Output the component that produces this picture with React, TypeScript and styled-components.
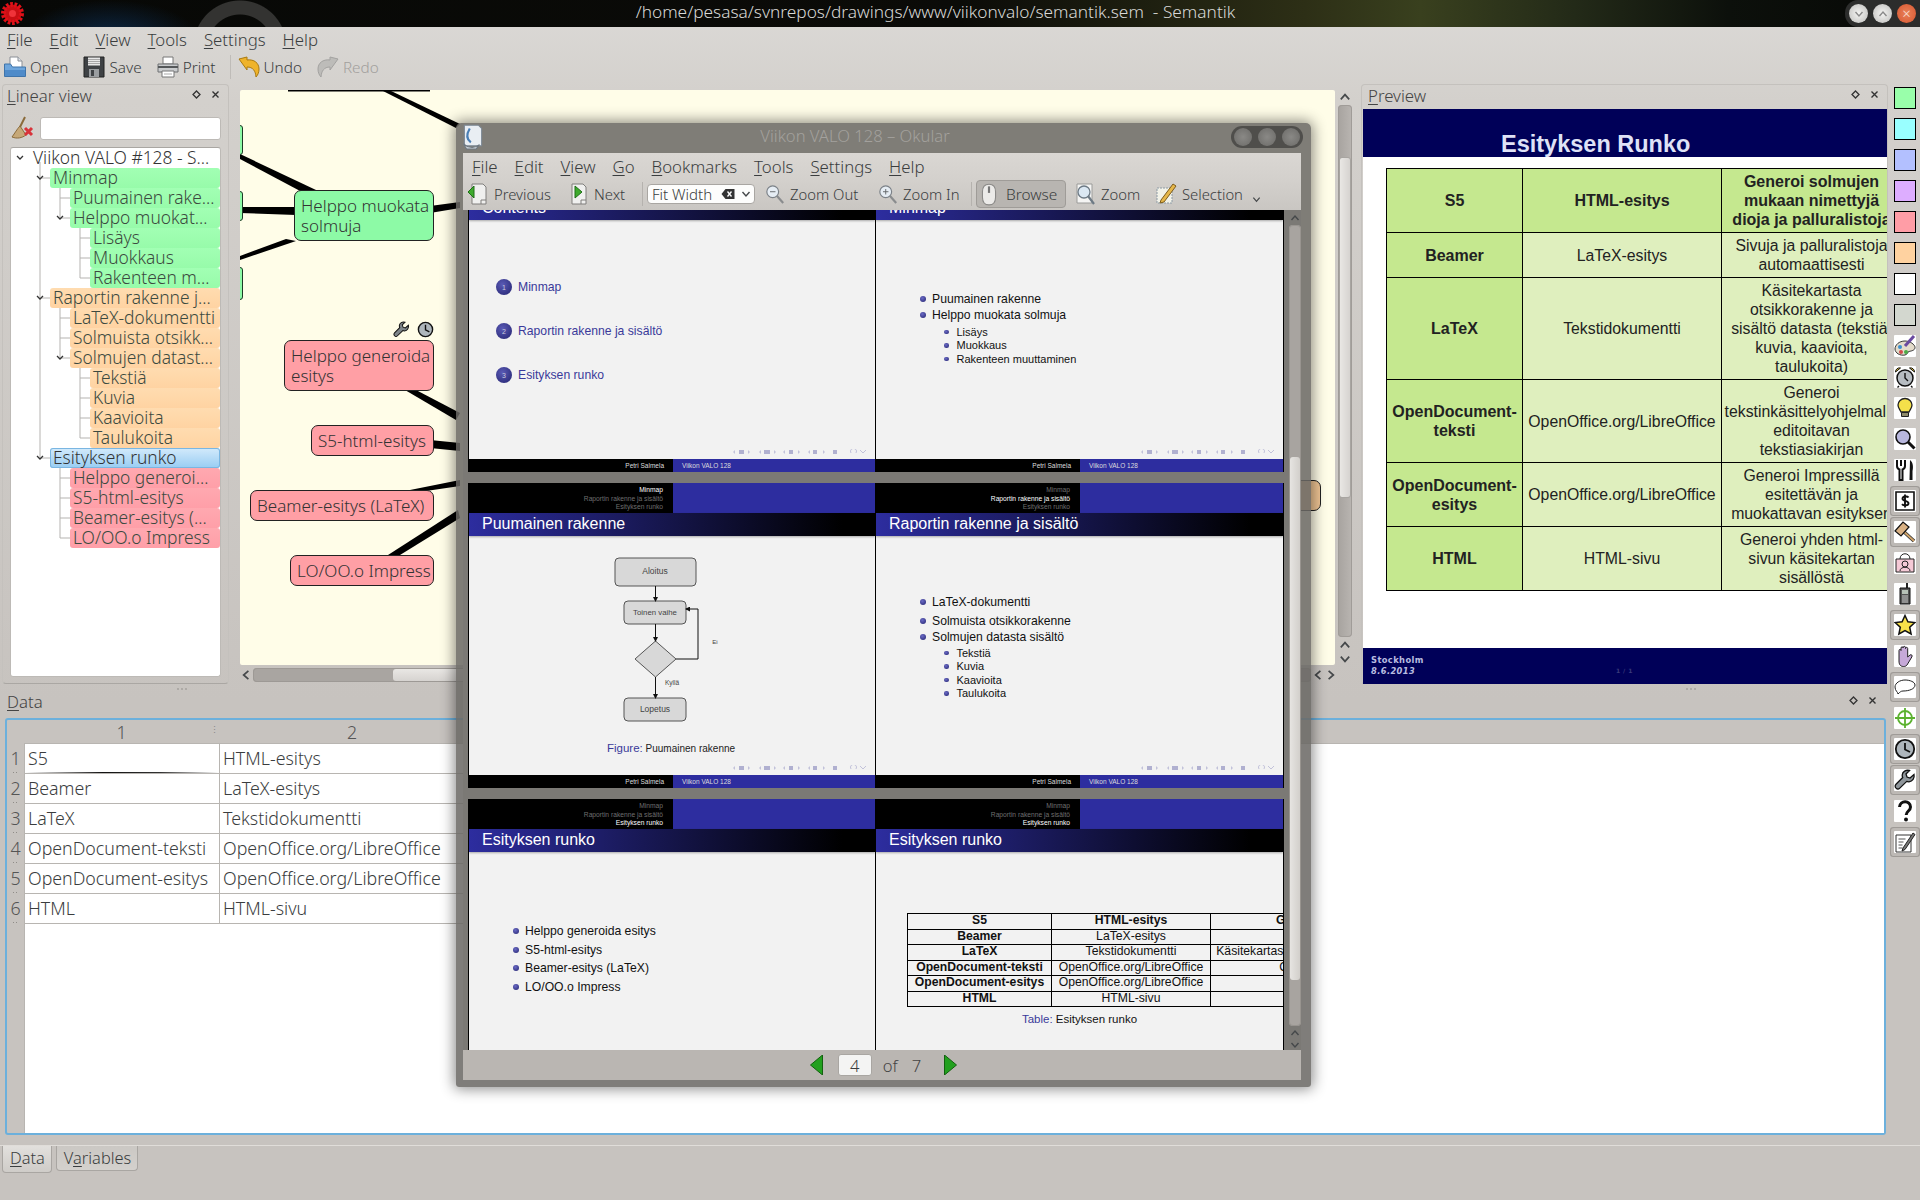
import React from 'react';
import styled, { createGlobalStyle } from 'styled-components';

const GlobalStyle = createGlobalStyle`
  html, body { margin: 0; padding: 0; background: #c7c3bf; }
  body { font-family: "Noto Sans", "DejaVu Sans", sans-serif; color: #3a3d3e; }
  #root { width: 1920px; height: 1200px; }
`;

/* ---------- shared drawing helpers ---------- */

const Ico: React.FC<{ size?: number; children: React.ReactNode }> = ({ size = 22, children }) => (
  <svg width={size} height={size} viewBox="0 0 22 22" style={{ flex: 'none', display: 'block' }}>
    {children}
  </svg>
);

const Chevron: React.FC<{ dir: 'up' | 'down' | 'left' | 'right'; size?: number; color?: string }> = ({
  dir,
  size = 10,
  color = '#45484a',
}) => {
  const paths = { up: 'M1.5 7 5 3l3.5 4', down: 'M1.5 3 5 7l3.5-4', left: 'M7 1.5 3 5l4 3.5', right: 'M3 1.5 7 5l-4 3.5' };
  return (
    <svg width={size} height={size} viewBox="0 0 10 10" style={{ flex: 'none', display: 'block' }}>
      <path d={paths[dir]} fill="none" stroke={color} strokeWidth="1.4" />
    </svg>
  );
};

const DockIcons = () => (
  <DockButtons>
    <svg width="9" height="9" viewBox="0 0 9 9">
      <path d="M4.5 1 8 4.5 4.5 8 1 4.5z" fill="none" stroke="#333" strokeWidth="1.3" />
    </svg>
    <svg width="9" height="9" viewBox="0 0 9 9">
      <path d="M1.5 1.5l6 6M7.5 1.5l-6 6" fill="none" stroke="#333" strokeWidth="1.4" />
    </svg>
  </DockButtons>
);

const OpenIcon = () => (
  <Ico>
    <path d="M6 1h8l4 4v8H6z" fill="#fff" stroke="#8a8f96" />
    <path d="M14 1v4h4" fill="#dfe3e8" stroke="#8a8f96" />
    <path d="M0.5 8h6l2 3H21.5v9.5H0.5z" fill="#6ea6dc" stroke="#3f74aa" />
    <path d="M1 14h20v6H1z" fill="#4f8bc9" />
  </Ico>
);
const SaveIcon = () => (
  <Ico>
    <path d="M1 1h20v20H1z" fill="#3f4245" stroke="#222" />
    <path d="M5 1.5h12v8H5z" fill="#e8e8e8" />
    <path d="M5 3.5h12M5 5.5h12M5 7.5h12" stroke="#a8a8a8" />
    <path d="M6 13h10v8H6z" fill="#9a9da0" />
    <path d="M8 14h3v6H8z" fill="#3f4245" />
  </Ico>
);
const PrintIcon = () => (
  <Ico>
    <path d="M6 1h10v7H6z" fill="#fff" stroke="#777" />
    <path d="M1 8h20v8H1z" fill="#c9cbcd" stroke="#6f7173" />
    <path d="M1 11h20" stroke="#55585a" strokeWidth="2" />
    <path d="M5 15h12v6H5z" fill="#fff" stroke="#777" />
    <path d="M7 18h8" stroke="#aaa" />
  </Ico>
);
const UndoIcon: React.FC<{ disabled?: boolean }> = ({ disabled }) => (
  <Ico>
    <path
      d="M1 3l8-2v3c7-1 12 3 12 9 0 3-1 6-3 8-.4-6-3-10-9-10v3z"
      transform={disabled ? 'matrix(-1 0 0 1 22 0)' : undefined}
      fill={disabled ? '#bdbcb9' : '#efb32a'}
      stroke={disabled ? '#a3a2a0' : '#a97a12'}
    />
  </Ico>
);
const DocArrowIcon: React.FC<{ left?: boolean }> = ({ left }) => (
  <Ico>
    <path d="M5 1h11l3 3v17H5z" fill="#f0f0ef" stroke="#807f7d" />
    <path d="M14 21v-4h5" fill="none" stroke="#807f7d" />
    <path d={left ? 'M1 9l6-6v12z' : 'M15 9l-7-6v12z'} fill="#3eaa2d" stroke="#1f6f18" />
  </Ico>
);
const MagnifierIcon: React.FC<{ mark?: 'plus' | 'minus' }> = ({ mark }) => (
  <Ico size={20}>
    <path d="M13 13l7 8" stroke="#8a8c8e" strokeWidth="2.4" />
    <circle cx="8.5" cy="8.5" r="6.5" fill="#e6edf4" stroke="#7b8187" strokeWidth="1.3" />
    {mark && <path d="M5.5 8.5h6" stroke="#5f6367" />}
    {mark === 'plus' && <path d="M8.5 5.5v6" stroke="#5f6367" />}
  </Ico>
);
const MouseIcon = () => (
  <Ico size={24}>
    <path d="M11 2c4 0 6 3 6 7v5c0 4-2 7-6 7s-6-3-6-7V9c0-4 2-7 6-7z" fill="#ecebe9" stroke="#8b8a88" />
    <path d="M11 4v6" stroke="#777" strokeWidth="2" />
  </Ico>
);
const PageZoomIcon = () => (
  <Ico>
    <path d="M3 1h15v19H3z" fill="#f4f4f3" stroke="#9b9b99" />
    <circle cx="10" cy="9" r="6" fill="#dbe8f3" stroke="#6d7a85" strokeWidth="1.3" />
    <path d="M14 13l6 8" stroke="#6d7a85" strokeWidth="2.2" />
  </Ico>
);
const SelectionIcon = () => (
  <Ico>
    <path d="M2 5h15v15H2z" fill="#f2f2e8" stroke="#8c9aa5" strokeDasharray="2 1" />
    <path d="M6 17 18 1l3 2L9 19l-4 1z" fill="#e6b74a" stroke="#7c5b1a" />
  </Ico>
);
const WrenchGlyph: React.FC<{ color?: string }> = ({ color = '#8e959a' }) => (
  <Ico>
    <path
      d="M20 5.5 16 9l-3-1-1-3 3.5-3.5C12 .6 8.5 2.5 8.2 6c0 1 .2 1.8.5 2.5L2 15.3c-1.2 1.2-1 2.8 0 3.8s2.7 1.1 3.8 0l6.9-6.7c.7.3 1.5.4 2.3.4 3.5-.3 5.8-3.6 5-7.3z"
      fill={color}
      stroke="#111"
      strokeWidth="1.3"
    />
  </Ico>
);
const ClockGlyph = () => (
  <Ico>
    <circle cx="11" cy="11" r="9.2" fill="#aeb6bc" stroke="#111" strokeWidth="1.8" />
    <path d="M11 5v6.5l5 2.5" fill="none" stroke="#111" strokeWidth="1.8" />
  </Ico>
);

/* ---------- right hand icon strip ---------- */

const stripIcons: { key: string; raised?: boolean; icon: React.ReactNode }[] = [
  {
    key: 'palette',
    icon: (
      <Ico>
        <path d="M11 6C5 6 1 10 1 14s5 7 10 6c3-.6 2-3 4-3.500s6-1 6-4-5-6.500-10-6.500z" fill="#e4dccb" stroke="#333" />
        <circle cx="6" cy="12" r="2" fill="#3a8fd0" />
        <circle cx="7" cy="17" r="2" fill="#d24a4a" />
        <circle cx="12" cy="17" r="2" fill="#4cab45" />
        <path d="M11 11 20 1" stroke="#6a4aa0" strokeWidth="3" />
      </Ico>
    ),
  },
  {
    key: 'alarm',
    icon: (
      <Ico>
        <circle cx="11" cy="12" r="8" fill="#b7bdc2" stroke="#111" strokeWidth="1.5" />
        <path d="M1.500 6a4 4 0 0 1 5-4zM20.500 6a4 4 0 0 0-5-4z" fill="#e8c63a" stroke="#111" />
        <path d="M11 7v5l3 3M5 20l-1.500 1.500M17 20l1.500 1.500" fill="none" stroke="#111" strokeWidth="1.4" />
      </Ico>
    ),
  },
  {
    key: 'bulb',
    icon: (
      <Ico>
        <path d="M11 1.500c-4 0-7 3-7 6.500 0 3 2 4.500 3 7h8c1-2.500 3-4 3-7 0-3.500-3-6.500-7-6.500z" fill="#f4e04a" stroke="#222" strokeWidth="1.3" />
        <path d="M7.500 15.500h7v4h-7z" fill="#8e8a6a" stroke="#222" />
      </Ico>
    ),
  },
  {
    key: 'search',
    icon: (
      <Ico>
        <path d="M14 14l6.500 6.500" stroke="#111" strokeWidth="3" />
        <circle cx="9" cy="9" r="7" fill="#b8b7dd" stroke="#111" strokeWidth="1.6" />
      </Ico>
    ),
  },
  {
    key: 'cutlery',
    icon: (
      <Ico>
        <path d="M3 1v6c0 2 1 3 2.500 3.500V21h3V10.500C10 10 11 9 11 7V1M7 1v6" fill="none" stroke="#111" strokeWidth="2" />
        <path d="M16 1c3 2 3.500 7 2.500 11V21h-3z" fill="#111" />
      </Ico>
    ),
  },
  {
    key: 'dollar',
    raised: true,
    icon: (
      <Ico>
        <path d="M2 2h18v18H2z" fill="#fff" stroke="#111" strokeWidth="1.6" />
        <path d="M14.500 7.500c-1-1.500-6-1.500-6 1.200s6 1.800 6 4.600-5.200 2.500-6.500.8M11 4.500v13" fill="none" stroke="#111" strokeWidth="1.9" />
      </Ico>
    ),
  },
  {
    key: 'hammer',
    raised: true,
    icon: (
      <Ico>
        <path d="M9 10 20 20" stroke="#333" strokeWidth="3.500" />
        <path d="M9 10 20 20" stroke="#d2a56b" strokeWidth="1.800" />
        <path d="M1 10 9 1l6 5-8 9z" fill="#d9b184" stroke="#111" strokeWidth="1.2" />
      </Ico>
    ),
  },
  {
    key: 'bag',
    icon: (
      <Ico>
        <path d="M2 7h18v13H2z" fill="#f5c9d6" stroke="#222" />
        <path d="M6 7c0-7 10-7 10 0" fill="none" stroke="#222" />
        <circle cx="11" cy="12" r="3" fill="#f5c9d6" stroke="#222" />
        <path d="M6 19c0-5 10-5 10 0" fill="none" stroke="#222" />
      </Ico>
    ),
  },
  {
    key: 'phone',
    icon: (
      <Ico>
        <path d="M12 0h2v5h-2z" fill="#222" />
        <path d="M6 5h10v16H6z" fill="#555" stroke="#111" />
        <path d="M8 7h6v4H8z" fill="#b8c2b8" />
        <path d="M8 13h6M8 15h6M8 17h6M8 19h6" stroke="#ccc" />
      </Ico>
    ),
  },
  {
    key: 'star',
    raised: true,
    icon: (
      <Ico>
        <path d="M11 1.500l2.900 6.300 6.900.8-5.100 4.600 1.400 6.800L11 16.600 4.900 20l1.400-6.800L1.200 8.600l6.900-.8z" fill="#f7e14a" stroke="#111" strokeWidth="1.500" />
      </Ico>
    ),
  },
  {
    key: 'hand',
    icon: (
      <Ico>
        <path d="M5 12V5.500c0-1.500 2-1.500 2 0V3c0-1.600 2.200-1.600 2.200 0v-.5c0-1.500 2.300-1.500 2.300 0V3.500c0-1.500 2.200-1.500 2.200 0V12l2.300-2c1.400-1 2.800.5 1.800 2L13 20c-1 1.200-2 1.500-3.500 1.500C6 21.500 5 19 5 16z" fill="#c6a9d8" stroke="#222" />
      </Ico>
    ),
  },
  {
    key: 'bubble',
    raised: true,
    icon: (
      <Ico>
        <path d="M4 18c0-2-3-3-3-7 0-4 5-7 10-7s10 2 10 5c0 4-6 6-12 6-2 0-3 1-5 3z" fill="#fff" stroke="#222" />
      </Ico>
    ),
  },
  {
    key: 'target',
    icon: (
      <Ico>
        <circle cx="11" cy="11" r="7" fill="none" stroke="#5bb12f" strokeWidth="1.8" />
        <path d="M11 1v20M1 11h20" stroke="#5bb12f" strokeWidth="1.8" />
      </Ico>
    ),
  },
  { key: 'clock', raised: true, icon: <ClockGlyph /> },
  { key: 'wrench', raised: true, icon: <WrenchGlyph /> },
  {
    key: 'help',
    icon: (
      <Ico>
        <path d="M5.500 7c.4-7 11-7 11 0 0 4-4.300 4-4.300 8" fill="none" stroke="#111" strokeWidth="3" />
        <circle cx="12" cy="19.500" r="2" fill="#111" />
      </Ico>
    ),
  },
  {
    key: 'note',
    raised: true,
    icon: (
      <Ico>
        <path d="M2 4h15v17H2z" fill="#fff" stroke="#333" />
        <path d="M4.500 8h7M4.500 11h5M4.500 14h4M4.500 17h4" stroke="#555" />
        <path d="M9 17 19 2l2 1.500-10 15-3 1.500z" fill="#777" stroke="#222" />
      </Ico>
    ),
  },
];

const swatches = ['#99ffaa', '#99ffff', '#b3c0ff', '#ddadff', '#ff9da6', '#ffd2a0', '#ffffff', '#d3d7cf'];

/* ---------- data ---------- */

type Tone = 'plain' | 'green' | 'orange' | 'blue' | 'red';
const treeRows: { text: string; level: number; tone: Tone; open?: boolean }[] = [
  { text: 'Viikon VALO #128 - S…', level: 0, tone: 'plain', open: true },
  { text: 'Minmap', level: 1, tone: 'green', open: true },
  { text: 'Puumainen rake…', level: 2, tone: 'green' },
  { text: 'Helppo muokat…', level: 2, tone: 'green', open: true },
  { text: 'Lisäys', level: 3, tone: 'green' },
  { text: 'Muokkaus', level: 3, tone: 'green' },
  { text: 'Rakenteen m…', level: 3, tone: 'green' },
  { text: 'Raportin rakenne j…', level: 1, tone: 'orange', open: true },
  { text: 'LaTeX-dokumentti', level: 2, tone: 'orange' },
  { text: 'Solmuista otsikk…', level: 2, tone: 'orange' },
  { text: 'Solmujen datast…', level: 2, tone: 'orange', open: true },
  { text: 'Tekstiä', level: 3, tone: 'orange' },
  { text: 'Kuvia', level: 3, tone: 'orange' },
  { text: 'Kaavioita', level: 3, tone: 'orange' },
  { text: 'Taulukoita', level: 3, tone: 'orange' },
  { text: 'Esityksen runko', level: 1, tone: 'blue', open: true },
  { text: 'Helppo generoi…', level: 2, tone: 'red' },
  { text: 'S5-html-esitys', level: 2, tone: 'red' },
  { text: 'Beamer-esitys (…', level: 2, tone: 'red' },
  { text: 'LO/OO.o Impress', level: 2, tone: 'red' },
];

const toneBg: Record<Tone, string> = {
  plain: 'transparent',
  green: 'linear-gradient(#a2ffb4, #97fbaa)',
  orange: 'linear-gradient(#ffdcb0, #ffd3a2)',
  blue: 'linear-gradient(#d3eafb, #98cdf3)',
  red: 'linear-gradient(#ffa9b0, #ff9fa8)',
};

const dataRows = [
  ['S5', 'HTML-esitys'],
  ['Beamer', 'LaTeX-esitys'],
  ['LaTeX', 'Tekstidokumentti'],
  ['OpenDocument-teksti', 'OpenOffice.org/LibreOffice'],
  ['OpenDocument-esitys', 'OpenOffice.org/LibreOffice'],
  ['HTML', 'HTML-sivu'],
];

const previewRows: { height: number; head?: boolean; cells: string[][] }[] = [
  { height: 64, head: true, cells: [['S5'], ['HTML-esitys'], ['Generoi solmujen', 'mukaan nimettyjä', 'dioja ja palluralistoja']] },
  { height: 45, cells: [['Beamer'], ['LaTeX-esitys'], ['Sivuja ja palluralistoja', 'automaattisesti']] },
  {
    height: 102,
    cells: [['LaTeX'], ['Tekstidokumentti'], ['Käsitekartasta', 'otsikkorakenne ja', 'sisältö datasta (tekstiä,', 'kuvia, kaavioita,', 'taulukoita)']],
  },
  {
    height: 83,
    cells: [['OpenDocument-', 'teksti'], ['OpenOffice.org/LibreOffice'], ['Generoi', 'tekstinkäsittelyohjelmalla', 'editoitavan', 'tekstiasiakirjan']],
  },
  {
    height: 64,
    cells: [['OpenDocument-', 'esitys'], ['OpenOffice.org/LibreOffice'], ['Generoi Impressillä', 'esitettävän ja', 'muokattavan esityksen']],
  },
  { height: 64, cells: [['HTML'], ['HTML-sivu'], ['Generoi yhden html-', 'sivun käsitekartan', 'sisällöstä']] },
];

const slideTableRows = [
  ['S5', 'HTML-esitys', 'Generoi solmujen mukaan nimettyjä dioja ja palluralistoja'],
  ['Beamer', 'LaTeX-esitys', 'Sivuja ja palluralistoja automaattisesti'],
  ['LaTeX', 'Tekstidokumentti', 'Käsitekartasta otsikkorakenne ja sisältö datasta (tekstiä, kuvia, kaavioita, taulukoita)'],
  ['OpenDocument-teksti', 'OpenOffice.org/LibreOffice', 'Generoi tekstinkäsittelyohjelmalla editoitavan tekstiasiakirjan'],
  ['OpenDocument-esitys', 'OpenOffice.org/LibreOffice', 'Generoi Impressillä esitettävän ja muokattavan esityksen'],
  ['HTML', 'HTML-sivu', 'Generoi yhden html-sivun käsitekartan sisällöstä'],
];

const sections = ['Minmap', 'Raportin rakenne ja sisältö', 'Esityksen runko'];

const mainMenu = [
  ['F', 'ile'],
  ['E', 'dit'],
  ['V', 'iew'],
  ['T', 'ools'],
  ['S', 'ettings'],
  ['H', 'elp'],
];
const okularMenu = [
  ['F', 'ile'],
  ['E', 'dit'],
  ['V', 'iew'],
  ['G', 'o'],
  ['B', 'ookmarks'],
  ['T', 'ools'],
  ['S', 'ettings'],
  ['H', 'elp'],
];

/* ---------- small composed parts ---------- */

const TreeLines = () => {
  const h = 20;
  const segs: string[] = [];
  const chevrons: React.ReactNode[] = [];
  treeRows.forEach((row, i) => {
    const cy = i * h + 10;
    const x = 9 + row.level * 20;
    if (row.level > 0) segs.push(`M${x} ${cy}H${x + 11}`);
    // vertical guide down from an open parent to its last child
    if (row.open) {
      let last = i;
      for (let j = i + 1; j < treeRows.length && treeRows[j].level > row.level; j++) {
        if (treeRows[j].level === row.level + 1) last = j;
      }
      if (last > i) segs.push(`M${x + 20} ${cy + 4}V${last * h + 10}`);
      chevrons.push(<path key={i} d={`M${x - 3} ${cy - 2}l3 3 3-3`} fill="none" stroke="#333" strokeWidth="1.3" />);
    }
  });
  return (
    <TreeSvg width="211" height="400">
      <path d={segs.join('')} fill="none" stroke="#b5b3b0" />
      {chevrons}
    </TreeSvg>
  );
};

const SlideNavMarks = () => (
  <NavMarks width="138" height="6" viewBox="0 0 138 6">
    {[0, 26, 50, 75].map((x) => (
      <path key={x} d={`M${x} 3l2-2v4zM${x + 17} 3l-2-2v4z`} fill="#c2c2da" />
    ))}
    <path d="M6 1h5v4H6zM31 1h6v4h-6zM56 1h4v4h-4zM80 1h4v4h-4zM100 1h4v4h-4z" fill="#b0b0d0" />
    <path d="M118 4a3 3 0 1 1 5 0M127 1l3 3 3-3" fill="none" stroke="#c2c2da" />
  </NavMarks>
);

const Slide: React.FC<{
  title: string;
  active: number;
  children?: React.ReactNode;
}> = ({ title, active, children }) => (
  <SlideBox>
    <SlideHeader>
      <SectionNav>
        {sections.map((s, i) => (
          <SectionLink key={s} $active={i === active}>
            {s}
          </SectionLink>
        ))}
      </SectionNav>
    </SlideHeader>
    <SlideTitle>{title}</SlideTitle>
    <SlideBody>
      {children}
      <SlideNavMarks />
    </SlideBody>
    <SlideFooter>
      <FooterAuthor>Petri Salmela</FooterAuthor>
      <FooterTalk>Viikon VALO 128</FooterTalk>
    </SlideFooter>
  </SlideBox>
);

const FlowChart = () => (
  <svg width="408" height="239" viewBox="468 536 408 239" style={{ display: 'block' }}>
    <defs>
      <marker id="arrowhead" markerWidth="5" markerHeight="5" refX="4" refY="2.5" orient="auto">
        <path d="M0 0l5 2.500L0 5z" fill="#111" />
      </marker>
    </defs>
    <g fill="#d8d8d8" stroke="#555">
      <rect x="614" y="558" width="81" height="28" rx="4" />
      <rect x="623" y="601" width="62" height="23" rx="4" />
      <path d="M654.500 641 675 659 654.500 677 634 659z" />
      <rect x="623" y="698" width="62" height="23" rx="4" />
    </g>
    <g fill="none" stroke="#111" markerEnd="url(#arrowhead)">
      <path d="M654.500 586V601" />
      <path d="M654.500 624V641" />
      <path d="M654.500 677V698" />
      <path d="M675 659H697V609H685" />
    </g>
    <g fontFamily="Liberation Sans, sans-serif" fontSize="8.5" fill="#444" textAnchor="middle">
      <text x="654" y="574">Aloitus</text>
      <text x="654" y="615" fontSize="7.8">Toinen vaihe</text>
      <text x="654" y="712">Lopetus</text>
      <text x="714" y="644" fontSize="6">Ei</text>
      <text x="671" y="685" fontSize="6.500">Kyllä</text>
    </g>
    <text x="606" y="752" fontFamily="Liberation Sans, sans-serif" fontSize="10" fill="#222">
      <tspan fill="#3a3a9a" fontSize="11.500">Figure:</tspan> Puumainen rakenne
    </text>
  </svg>
);

export default function App() {
  return (
    <Root>
      <GlobalStyle />
      <TitleBar>
        <svg width="26" height="27" viewBox="0 0 26 27">
          <circle cx="12.500" cy="13.500" r="9" fill="#c90f14" stroke="#e01018" strokeWidth="5" strokeDasharray="2.500 1.500" />
          <circle cx="12.500" cy="13.500" r="3.500" fill="#f0333a" />
        </svg>
        <TitleText>/home/pesasa/svnrepos/drawings/www/viikonvalo/semantik.sem&nbsp; - Semantik</TitleText>
        <WindowButtons>
          <RoundButton>
            <Chevron dir="down" color="#8a8a8a" />
          </RoundButton>
          <RoundButton>
            <Chevron dir="up" color="#8a8a8a" />
          </RoundButton>
          <RoundButton $close>×</RoundButton>
        </WindowButtons>
      </TitleBar>

      <MenuBar>
        {mainMenu.map(([m, rest]) => (
          <MenuItem key={m}>
            <Mnemonic>{m}</Mnemonic>
            {rest}
          </MenuItem>
        ))}
      </MenuBar>

      <ToolBar>
        <ToolButton>
          <OpenIcon />
          Open
        </ToolButton>
        <ToolButton>
          <SaveIcon />
          Save
        </ToolButton>
        <ToolButton>
          <PrintIcon />
          Print
        </ToolButton>
        <ToolSeparator />
        <ToolButton>
          <UndoIcon />
          Undo
        </ToolButton>
        <ToolButton $disabled>
          <UndoIcon disabled />
          Redo
        </ToolButton>
      </ToolBar>

      <Workspace>
        <LeftDock>
          <DockHeader $inset={4}>
            <DockTitle>
              <Mnemonic>L</Mnemonic>inear view
            </DockTitle>
            <DockIcons />
          </DockHeader>
          <SearchRow>
            <svg width="24" height="24" viewBox="0 0 24 24">
              <path d="M14 1 9 11" stroke="#8a6a3a" strokeWidth="2" />
              <path d="M9 10c-3 3-5 7-8 11 5 2 10 1 14-2z" fill="#c6a878" stroke="#8a6a3a" />
              <path d="M14 12l7 7M21 12l-7 7" stroke="#d8333a" strokeWidth="3" />
            </svg>
            <SearchInput />
          </SearchRow>
          <TreeBox>
            <TreeLines />
            {treeRows.map((row) => (
              <TreeRow key={row.text} $level={row.level} $tone={row.tone}>
                {row.text}
              </TreeRow>
            ))}
          </TreeBox>
          <Grip />
        </LeftDock>

        <CanvasColumn>
          <CanvasAndBar>
            <Canvas>
              <EdgeLayer width="1095" height="575">
                <g fill="#000">
                  <polygon points="141,0 149,0 220,34 216,38" />
                  <polygon points="0,64 0,69 62,102 76,100" />
                  <polygon points="0,117 0,123 56,125 56,117" />
                  <polygon points="0,166 0,170 56,151 46,149" />
                  <polygon points="190,116 220,112 220,118 190,123" />
                  <polygon points="165,300 176,300 220,323 216,330" />
                  <polygon points="190,350 220,353 220,361 190,358" />
                  <polygon points="170,400 220,390 220,396 186,401" />
                  <polygon points="148,465 160,465 220,428 218,420" />
                  <rect x="48" y="0" width="142" height="1.500" />
                </g>
              </EdgeLayer>
              <StubNode $top={35} $height={30} />
              <StubNode $top={101} $height={30} />
              <StubNode $top={177} $height={33} />
              <MapNode $tone="green" $x={54} $y={100} $w={140} $h={51}>
                {'Helppo muokata\nsolmuja'}
              </MapNode>
              <NodeIcons>
                <WrenchGlyph color="#7d8489" />
                <ClockGlyph />
              </NodeIcons>
              <MapNode $tone="red" $x={44} $y={250} $w={150} $h={51}>
                {'Helppo generoida\nesitys'}
              </MapNode>
              <MapNode $tone="red" $x={71} $y={335} $w={123} $h={31}>
                S5-html-esitys
              </MapNode>
              <MapNode $tone="red" $x={10} $y={400} $w={184} $h={31}>
                Beamer-esitys (LaTeX)
              </MapNode>
              <MapNode $tone="red" $x={50} $y={465} $w={144} $h={31}>
                LO/OO.o Impress
              </MapNode>
              <MapNode $tone="orange" $x={1030} $y={390} $w={51} $h={31} />
            </Canvas>
            <VScroll>
              <Chevron dir="up" size={12} />
              <VTrack>
                <VHandle />
              </VTrack>
              <Chevron dir="up" size={12} />
              <Chevron dir="down" size={12} />
            </VScroll>
          </CanvasAndBar>
          <HScroll>
            <Chevron dir="left" size={12} />
            <HTrack>
              <HHandle />
            </HTrack>
            <Chevron dir="left" size={12} />
            <Chevron dir="right" size={12} />
          </HScroll>
          <Grip />
        </CanvasColumn>

        <PreviewDock>
          <DockHeader>
            <DockTitle>
              <Mnemonic>P</Mnemonic>review
            </DockTitle>
            <DockIcons />
          </DockHeader>
          <PreviewSheet>
            <PreviewHead>Esityksen Runko</PreviewHead>
            <PreviewMain>
              <PreviewTable>
                <colgroup>
                  <col width="136" />
                  <col width="199" />
                  <col width="180" />
                </colgroup>
                <tbody>
                  {previewRows.map((row) => (
                    <tr key={row.cells[0].join('')} style={{ height: row.height }}>
                      {row.cells.map((lines, c) => (
                        <PreviewCell key={c} $strong={c === 0 || !!row.head} $dark={c === 0 || !!row.head}>
                          {lines.map((l) => (
                            <CellLine key={l}>{l}</CellLine>
                          ))}
                        </PreviewCell>
                      ))}
                    </tr>
                  ))}
                </tbody>
              </PreviewTable>
            </PreviewMain>
            <PreviewFoot>
              <FootPlace>
                Stockholm
                <br />
                <i>8.6.2013</i>
              </FootPlace>
              <FootPage>1 / 1</FootPage>
            </PreviewFoot>
          </PreviewSheet>
          <Grip />
        </PreviewDock>

        <IconStrip>
          {swatches.map((c) => (
            <Swatch key={c} $color={c} />
          ))}
          {stripIcons.map((item) => (
            <IconTile key={item.key} $raised={item.raised}>
              {item.icon}
            </IconTile>
          ))}
        </IconStrip>
      </Workspace>

      <DataDock>
        <DockHeader $inset={7}>
          <DockTitle>
            <Mnemonic>D</Mnemonic>ata
          </DockTitle>
          <DockIcons />
        </DockHeader>
        <DataFrame>
          <DataCorner />
          <ColumnHeaders>
            <ColumnLabel $w={195}>1</ColumnLabel>
            <ColumnLabel $w={266}>2</ColumnLabel>
          </ColumnHeaders>
          <RowHeaders>
            {dataRows.map((_, i) => (
              <RowLabel key={i}>{i + 1}</RowLabel>
            ))}
          </RowHeaders>
          <DataBody>
            {dataRows.map((r, i) => (
              <DataRow key={i}>
                <DataCell $current={i === 0}>{r[0]}</DataCell>
                <DataCell>{r[1]}</DataCell>
              </DataRow>
            ))}
          </DataBody>
        </DataFrame>
      </DataDock>

      <TabBar>
        <Tab $active>
          <Mnemonic>D</Mnemonic>ata
        </Tab>
        <Tab>
          V<Mnemonic>a</Mnemonic>riables
        </Tab>
      </TabBar>

      <OkularWindow>
        <OkularTitle>
          <OkularLogo width="26" height="28" viewBox="0 0 22 26">
            <path d="M3 3h13l3 3v16H3z" fill="#e9eef3" stroke="#7e8a96" />
            <path d="M8 6c-3 5-3 10 1 13" fill="none" stroke="#4a7fb5" strokeWidth="2" />
            <path d="M2 20c4 4 10 5 15 1l-3 4H5z" fill="#cfd6dc" stroke="#6d7780" />
          </OkularLogo>
          <OkularCaption>Viikon VALO 128 – Okular</OkularCaption>
          <OkularButtons>
            <OkularDot />
            <OkularDot />
            <OkularDot />
          </OkularButtons>
        </OkularTitle>
        <OkularInner>
          <OkularMenu>
            {okularMenu.map(([m, rest]) => (
              <MenuItem key={m}>
                <Mnemonic>{m}</Mnemonic>
                {rest}
              </MenuItem>
            ))}
          </OkularMenu>
          <OkularBar>
            <OkTool $w={100}>
              <DocArrowIcon left />
              Previous
            </OkTool>
            <OkTool $w={75}>
              <DocArrowIcon />
              Next
            </OkTool>
            <OkSep />
            <FitCombo>
              Fit Width
              <ComboClear width="15" height="12" viewBox="0 0 14 12">
                <path d="M4 1h9v10H4L0 6z" fill="#333" />
                <path d="M6 3.500l4 5M10 3.500l-4 5" stroke="#fff" strokeWidth="1.300" />
              </ComboClear>
              <Chevron dir="down" size={10} />
            </FitCombo>
            <OkTool $w={113}>
              <MagnifierIcon mark="minus" />
              Zoom Out
            </OkTool>
            <OkTool $w={93}>
              <MagnifierIcon mark="plus" />
              Zoom In
            </OkTool>
            <OkSep />
            <BrowseTool>
              <MouseIcon />
              Browse
            </BrowseTool>
            <OkTool $w={81}>
              <PageZoomIcon />
              Zoom
            </OkTool>
            <OkTool $w={95}>
              <SelectionIcon />
              Selection
            </OkTool>
            <MoreChevron>
              <Chevron dir="down" size={9} />
            </MoreChevron>
          </OkularBar>

          <OkularView>
            <Pages>
              <PagesGrid>
                <Slide title="Contents" active={0}>
                  <ContentsList>
                    {sections.map((s, i) => (
                      <ContentsItem key={s}>
                        <Ball>{i + 1}</Ball>
                        {s}
                      </ContentsItem>
                    ))}
                  </ContentsList>
                </Slide>
                <Slide title="Minmap" active={0}>
                  <BulletList $top={71}>
                    <Bullet>Puumainen rakenne</Bullet>
                    <Bullet $after={2}>Helppo muokata solmuja</Bullet>
                    <Bullet $sub>Lisäys</Bullet>
                    <Bullet $sub>Muokkaus</Bullet>
                    <Bullet $sub>Rakenteen muuttaminen</Bullet>
                  </BulletList>
                </Slide>

                <Slide title="Puumainen rakenne" active={0}>
                  <FlowChart />
                </Slide>
                <Slide title="Raportin rakenne ja sisältö" active={1}>
                  <BulletList $top={58}>
                    <Bullet $after={3}>LaTeX-dokumentti</Bullet>
                    <Bullet>Solmuista otsikkorakenne</Bullet>
                    <Bullet $after={1}>Solmujen datasta sisältö</Bullet>
                    <Bullet $sub>Tekstiä</Bullet>
                    <Bullet $sub>Kuvia</Bullet>
                    <Bullet $sub>Kaavioita</Bullet>
                    <Bullet $sub>Taulukoita</Bullet>
                  </BulletList>
                </Slide>

                <Slide title="Esityksen runko" active={2}>
                  <BulletList $top={71}>
                    <Bullet $after={2.5}>Helppo generoida esitys</Bullet>
                    <Bullet $after={2.5}>S5-html-esitys</Bullet>
                    <Bullet $after={2.5}>Beamer-esitys (LaTeX)</Bullet>
                    <Bullet>LO/OO.o Impress</Bullet>
                  </BulletList>
                </Slide>
                <Slide title="Esityksen runko" active={2}>
                  <SlideTable>
                    <colgroup>
                      <col width="144" />
                      <col width="159" />
                      <col width="464" />
                    </colgroup>
                    <tbody>
                      {slideTableRows.map((r, i) => (
                        <tr key={i}>
                          <SlideCell $bold>{r[0]}</SlideCell>
                          <SlideCell $bold={i === 0}>{r[1]}</SlideCell>
                          <SlideCell $bold={i === 0}>{r[2]}</SlideCell>
                        </tr>
                      ))}
                    </tbody>
                  </SlideTable>
                  <SlideCaption>
                    <em>Table:</em> Esityksen runko
                  </SlideCaption>
                </Slide>
              </PagesGrid>
            </Pages>
            <OkularVScroll>
              <Chevron dir="up" size={10} />
              <OkularVTrack>
                <OkularVHandle />
              </OkularVTrack>
              <Chevron dir="up" size={10} />
              <Chevron dir="down" size={10} />
            </OkularVScroll>
          </OkularView>

          <PageNav>
            <svg width="13" height="20" viewBox="0 0 13 20">
              <path d="M12.500 0v20L.5 10z" fill="#22a01e" stroke="#12620f" />
            </svg>
            <PageInput>4</PageInput>
            <PageOf $after={14}>of</PageOf>
            <PageOf $after={23}>7</PageOf>
            <svg width="13" height="20" viewBox="0 0 13 20">
              <path d="M.5 0v20l12-10z" fill="#22a01e" stroke="#12620f" />
            </svg>
          </PageNav>
        </OkularInner>
      </OkularWindow>
    </Root>
  );
}

/* ---------- main window ---------- */

const Root = styled.div`
  position: relative;
  width: 1920px;
  height: 1200px;
  overflow: hidden;
  display: flex;
  flex-direction: column;
  background: linear-gradient(#dcdad7 0, #d3d0cc 100px, #c7c3bf 700px);
  font-size: 16.8px;
  font-weight: 300;
`;

const TitleBar = styled.div`
  flex: none;
  height: 27px;
  display: flex;
  align-items: center;
  justify-content: space-between;
  background:
    radial-gradient(circle at 240px 47px, transparent 32px, #333331 33px, #333331 46px, transparent 47px),
    radial-gradient(ellipse 90px 40px at 110px 40px, #0d2a4a, transparent),
    linear-gradient(90deg, #070806 0, #0b0b08 50%, #2d2f16 68%, #39401e 74%, #232a18 82%, #0c100b 90%, #070806 100%);
`;

const TitleText = styled.div`
  color: #d8d8d6;
  font-size: 17.3px;
  margin-top: -4px;
  white-space: nowrap;
`;

const WindowButtons = styled.div`
  display: flex;
  align-items: center;
  gap: 5px;
  height: 27px;
  padding: 0 4px 0 4px;
  border-radius: 13px 0 0 13px;
  background: rgba(60, 60, 60, 0.7);
`;

const RoundButton = styled.div<{ $close?: boolean }>`
  width: 19px;
  height: 19px;
  border-radius: 50%;
  display: flex;
  align-items: center;
  justify-content: center;
  font-size: 15px;
  line-height: 1;
  color: ${(p) => (p.$close ? '#fbe3d8' : '#777')};
  background: ${(p) => (p.$close ? 'radial-gradient(circle, #e8825a, #d8552f)' : 'radial-gradient(circle, #f4f4f2, #bdbdbb)')};
`;

const MenuBar = styled.div`
  flex: none;
  height: 26px;
  display: flex;
  align-items: center;
  gap: 17px;
  padding: 0 0 2px 7px;
  box-sizing: border-box;
`;

const MenuItem = styled.span`
  white-space: nowrap;
`;

const Mnemonic = styled.span`
  text-decoration: underline;
  text-underline-offset: 2px;
  text-decoration-thickness: 1px;
`;

const ToolBar = styled.div`
  flex: none;
  height: 31px;
  display: flex;
  align-items: center;
  padding: 0 0 4px 4px;
  box-sizing: border-box;
  gap: 15px;
  font-size: 15.3px;
`;

const ToolButton = styled.div<{ $disabled?: boolean }>`
  display: flex;
  align-items: center;
  gap: 4px;
  white-space: nowrap;
  color: ${(p) => (p.$disabled ? '#a2a09d' : 'inherit')};
`;

const ToolSeparator = styled.div`
  width: 1px;
  height: 24px;
  background: #bfbcb8;
  margin: 0 -8px 0 -1px;
`;

const Workspace = styled.div`
  flex: none;
  height: 606px;
  display: flex;
  align-items: flex-start;
`;

const Panel = styled.div`
  position: relative;
  border: 1px solid #c4c1bd;
  border-bottom-color: #aaa7a3;
  border-radius: 4px;
`;

const LeftDock = styled(Panel)`
  flex: none;
  width: 227px;
  height: 600px;
  margin-left: 2px;
  box-sizing: border-box;
`;

const DockHeader = styled.div<{ $inset?: number }>`
  height: 24px;
  box-sizing: border-box;
  display: flex;
  align-items: center;
  justify-content: space-between;
  padding: 0 8px 3px ${(p) => p.$inset ?? 6}px;
`;

const DockTitle = styled.div`
  font-size: 16.8px;
  color: #444;
`;

const DockButtons = styled.div`
  display: flex;
  gap: 10px;
  align-items: center;
  margin-top: -2px;
`;

const SearchRow = styled.div`
  height: 35px;
  display: flex;
  align-items: center;
  gap: 5px;
  padding: 3px 0 0 8px;
  box-sizing: border-box;
`;

const SearchInput = styled.div`
  width: 181px;
  height: 23px;
  background: #fff;
  border: 1px solid #bdbab6;
  border-radius: 3px;
  box-sizing: border-box;
`;

const TreeBox = styled.div`
  position: relative;
  width: 211px;
  height: 530px;
  margin: 3px 0 0 7px;
  background: #fff;
  border: 1px solid #bdbab6;
  border-top-color: #a9a6a2;
  border-radius: 3px;
  box-sizing: border-box;
  font-size: 17.4px;
`;

const TreeSvg = styled.svg`
  position: absolute;
  left: 0;
  top: 0;
`;

const TreeRow = styled.div<{ $level: number; $tone: Tone }>`
  position: relative;
  height: 20px;
  line-height: 19px;
  margin-left: ${(p) => 19 + p.$level * 20}px;
  padding-left: 3px;
  border-radius: 3px;
  background: ${(p) => toneBg[p.$tone]};
  box-shadow: ${(p) => (p.$tone === 'blue' ? 'inset 0 0 0 1px #7ab6e2' : 'none')};
  color: ${(p) => (p.$tone === 'plain' || p.$tone === 'blue' ? '#333' : '#3c4a40')};
  white-space: nowrap;
`;

const Grip = styled.div`
  position: absolute;
  left: 50%;
  bottom: -8px;
  width: 12px;
  height: 4px;
  margin-left: 60px;
  background-image: radial-gradient(circle, #8f8c88 0.6px, transparent 0.8px);
  background-size: 4px 4px;
`;

const CanvasColumn = styled.div`
  position: relative;
  flex: none;
  width: 1112px;
  margin: 6px 0 0 11px;
`;

const CanvasAndBar = styled.div`
  display: flex;
  gap: 3px;
  height: 575px;
`;

const Canvas = styled.div`
  position: relative;
  width: 1095px;
  height: 575px;
  overflow: hidden;
  background: #fffde8;
  border-radius: 2px;
`;

const EdgeLayer = styled.svg`
  position: absolute;
  left: 0;
  top: 0;
`;

const StubNode = styled.div<{ $top: number; $height: number }>`
  position: absolute;
  left: -4px;
  top: ${(p) => p.$top}px;
  width: 7px;
  height: ${(p) => p.$height}px;
  background: #8dfaa6;
  border: 1px solid #1c3a26;
  border-radius: 0 3px 3px 0;
  box-sizing: border-box;
`;

const MapNode = styled.div<{ $tone: 'green' | 'red' | 'orange'; $x: number; $y: number; $w: number; $h: number }>`
  position: absolute;
  left: ${(p) => p.$x}px;
  top: ${(p) => p.$y}px;
  width: ${(p) => p.$w}px;
  height: ${(p) => p.$h}px;
  box-sizing: border-box;
  display: flex;
  align-items: center;
  padding: 0 0 0 6px;
  line-height: 20px;
  font-size: 17px;
  color: #333;
  white-space: pre;
  border: 1px solid #222;
  border-radius: 7px;
  background: ${(p) => (p.$tone === 'green' ? '#8dfaa6' : p.$tone === 'red' ? '#ff9fa5' : '#f0c594')};
`;

const NodeIcons = styled.div`
  position: absolute;
  left: 153px;
  top: 231px;
  display: flex;
  gap: 7px;

  svg {
    width: 17px;
    height: 17px;
  }
`;

const VScroll = styled.div`
  flex: none;
  width: 14px;
  display: flex;
  flex-direction: column;
  align-items: center;
  padding-top: 1px;
  gap: 2px;
`;

const VTrack = styled.div`
  flex: 1;
  width: 14px;
  border-radius: 4px;
  background: linear-gradient(90deg, #a7a39f, #b9b5b1);
  box-shadow: inset 0 0 0 1px #a09c98;
  padding-top: 52px;
  box-sizing: border-box;
`;

const VHandle = styled.div`
  height: 341px;
  margin: 0 1px;
  border-radius: 3px;
  background: linear-gradient(90deg, #e9e7e4, #d6d3d0);
  border: 1px solid #a8a5a1;
  box-sizing: border-box;
`;

const HScroll = styled.div`
  height: 18px;
  width: 1097px;
  display: flex;
  align-items: center;
  gap: 1px;
  margin-top: 1px;
`;

const HTrack = styled.div`
  flex: 1;
  height: 14px;
  border-radius: 4px;
  background: #a9a5a1;
  box-shadow: inset 0 0 0 1px #9d9995;
  padding-left: 140px;
  box-sizing: border-box;
`;

const HHandle = styled.div`
  height: 12px;
  width: 500px;
  margin-top: 1px;
  border-radius: 3px;
  background: linear-gradient(#e9e7e4, #d6d3d0);
`;

const PreviewDock = styled(Panel)`
  flex: none;
  width: 527px;
  height: 600px;
  margin-left: 9px;
  box-sizing: border-box;
`;

const PreviewSheet = styled.div`
  display: flex;
  flex-direction: column;
  height: 575px;
  margin-left: 1px;
  overflow: hidden;
  background: #fff;
`;

const PreviewHead = styled.div`
  flex: none;
  height: 48px;
  box-sizing: border-box;
  padding: 22px 0 0 138px;
  background: #000058;
  color: #dfe2f6;
  font: bold 23.5px/26px "Liberation Sans", Arial, sans-serif;
`;

const PreviewMain = styled.div`
  flex: 1;
  padding: 11px 0 0 23px;
`;

const PreviewTable = styled.table`
  border-collapse: collapse;
  table-layout: fixed;
  width: 515px;
  font: 15.8px/19px "Liberation Sans", Arial, sans-serif;
  color: #222;
`;

const PreviewCell = styled.td<{ $strong: boolean; $dark: boolean }>`
  padding: 0 2px;
  border: 1px solid #000;
  text-align: center;
  vertical-align: middle;
  white-space: nowrap;
  font-weight: ${(p) => (p.$strong ? 'bold' : 'normal')};
  font-size: ${(p) => (p.$strong ? 16 : 15.8)}px;
  background: ${(p) => (p.$dark ? '#c5e88f' : '#dfefbe')};
`;

const CellLine = styled.span`
  display: block;
`;

const PreviewFoot = styled.div`
  flex: none;
  height: 36px;
  display: flex;
  align-items: center;
  background: #000058;
  color: #b9bde0;
  font: bold 8.3px/11px "DejaVu Sans", sans-serif;
  padding-left: 8px;
  letter-spacing: 0.4px;
`;

const FootPlace = styled.div`
  width: 245px;
`;

const FootPage = styled.div`
  color: #3a3a7a;
  font-size: 6px;
  margin-top: 8px;
`;

const IconStrip = styled.div`
  flex: none;
  width: 22px;
  margin: 3px 0 0 6px;
  display: flex;
  flex-direction: column;
  gap: 9px;
`;

const Swatch = styled.div<{ $color: string }>`
  width: 22px;
  height: 22px;
  box-sizing: border-box;
  border: 1px solid #000;
  background: ${(p) => p.$color};
`;

const IconTile = styled.div<{ $raised?: boolean }>`
  width: 22px;
  height: 22px;
  background: #fff;
  box-shadow: ${(p) => (p.$raised ? '0 0 0 3px #bdb9b5, 0 0 0 4px #9f9b97' : 'none')};
  border-radius: 1px;
`;

const DataDock = styled.div`
  flex: none;
  height: 455px;
  display: flex;
  flex-direction: column;
  padding: 1px 35px 0 0;
  box-sizing: border-box;
`;

const DataFrame = styled.div`
  width: 1881px;
  height: 417px;
  margin: 3px 0 0 5px;
  box-sizing: border-box;
  display: grid;
  grid-template-columns: 17px 1fr;
  grid-template-rows: 23px 1fr;
  border: 2px solid #6cb0dc;
  border-radius: 3px;
  font-size: 17.8px;
`;

const DataCorner = styled.div``;

const ColumnHeaders = styled.div`
  display: flex;
  align-items: center;
`;

const ColumnLabel = styled.div<{ $w: number }>`
  width: ${(p) => p.$w}px;
  text-align: center;
  position: relative;
  color: #555;

  &:not(:last-child)::after {
    content: '⋮';
    position: absolute;
    right: 0;
    top: 3px;
    font-size: 9px;
    color: #888;
  }
`;

const RowHeaders = styled.div`
  display: flex;
  flex-direction: column;
`;

const RowLabel = styled.div`
  position: relative;
  height: 30px;
  line-height: 30px;
  text-align: center;
  color: #555;

  &::after {
    content: '';
    position: absolute;
    left: 5px;
    right: 5px;
    bottom: 0;
    height: 1px;
    background-image: radial-gradient(circle, #8f8c88 0.5px, transparent 0.7px);
    background-size: 3px 1px;
  }
`;

const DataBody = styled.div`
  background: #fff;
  border-left: 1px solid #b8b5b1;
  border-top: 1px solid #b8b5b1;
`;

const DataRow = styled.div`
  display: grid;
  grid-template-columns: 195px 262px;
  width: 457px;
  height: 30px;
  box-sizing: border-box;
  border-bottom: 1px solid #b8b5b1;
`;

const DataCell = styled.div<{ $current?: boolean }>`
  position: relative;
  padding-left: 3px;
  line-height: 29px;
  white-space: nowrap;
  border-right: 1px solid #b8b5b1;

  &::after {
    content: '';
    display: ${(p) => (p.$current ? 'block' : 'none')};
    position: absolute;
    left: 0;
    right: 0;
    bottom: 0;
    height: 1px;
    background: linear-gradient(90deg, #fff, #111 40%, #333 70%, #fff);
  }
`;

const TabBar = styled.div`
  flex: none;
  display: flex;
  align-items: flex-start;
  gap: 4px;
  padding-left: 2px;
  height: 55px;
  border-top: 1px solid #e0ddd9;
  box-sizing: border-box;
  font-size: 16.4px;
`;

const Tab = styled.div<{ $active?: boolean }>`
  height: ${(p) => (p.$active ? 27 : 25)}px;
  line-height: 23px;
  padding: 0 6px 0 7px;
  border: 1px solid #a9a6a2;
  border-top: none;
  border-radius: 0 0 4px 4px;
  box-sizing: border-box;
  background: ${(p) => (p.$active ? 'linear-gradient(#e2e0dd, #cfccc8)' : 'linear-gradient(#cbc8c4, #d4d1cd)')};
`;

/* ---------- floating Okular window ---------- */

const OkularWindow = styled.div`
  position: absolute;
  left: 456px;
  top: 123px;
  width: 855px;
  height: 964px;
  display: flex;
  flex-direction: column;
  box-sizing: border-box;
  padding: 0 10px 7px 7px;
  border-radius: 5px 5px 3px 3px;
  background: rgba(106, 104, 100, 0.86);
  box-shadow: 0 0 14px 2px rgba(0, 0, 0, 0.45);
`;

const OkularTitle = styled.div`
  position: relative;
  flex: none;
  height: 30px;
  display: flex;
  align-items: center;
`;

const OkularLogo = styled.svg`
  margin: -4px 0 0 -3px;
`;

const OkularCaption = styled.div`
  position: absolute;
  left: 0;
  right: 54px;
  top: 1px;
  text-align: center;
  color: #a3a19d;
  font-size: 16.6px;
`;

const OkularButtons = styled.div`
  margin-left: auto;
  display: flex;
  gap: 6px;
  padding: 2px 3px;
  margin: -2px -2px 0 auto;
  border-radius: 12px;
  background: rgba(40, 40, 40, 0.55);
`;

const OkularDot = styled.div`
  width: 18px;
  height: 18px;
  border-radius: 50%;
  background: radial-gradient(circle, #8a8986, #6b6a67);
`;

const OkularInner = styled.div`
  flex: 1;
  min-height: 0;
  display: flex;
  flex-direction: column;
`;

const OkularMenu = styled.div`
  flex: none;
  height: 28px;
  display: flex;
  align-items: center;
  gap: 17px;
  padding: 0 0 2px 9px;
  box-sizing: border-box;
  background: linear-gradient(#dad7d3, #d3d0cc);
`;

const OkularBar = styled.div`
  flex: none;
  height: 29px;
  display: flex;
  align-items: center;
  padding: 0 0 3px 4px;
  box-sizing: border-box;
  background: linear-gradient(#d3d0cc, #c9c6c2);
`;

const OkTool = styled.div<{ $w: number }>`
  flex: none;
  width: ${(p) => p.$w}px;
  display: flex;
  align-items: center;
  gap: 5px;
  white-space: nowrap;
  font-size: 14.8px;
`;

const OkSep = styled.div`
  width: 1px;
  height: 24px;
  margin: 0 4px 0 0;
  background: #b5b2ae;
`;

const FitCombo = styled.div`
  width: 108px;
  height: 20px;
  box-sizing: border-box;
  display: flex;
  align-items: center;
  gap: 5px;
  padding: 0 3px 0 4px;
  margin-right: 10px;
  font-size: 15px;
  background: #fdfdfc;
  border: 1px solid #a9a6a2;
  border-radius: 4px;
  white-space: nowrap;
`;

const ComboClear = styled.svg`
  margin-left: auto;
  flex: none;
`;

const BrowseTool = styled.div`
  flex: none;
  width: 90px;
  height: 28px;
  box-sizing: border-box;
  margin-right: 8px;
  display: flex;
  align-items: center;
  font-size: 15.4px;
  gap: 5px;
  background: #b8b5b1;
  border: 1px solid #9f9c98;
  border-radius: 4px;
`;

const MoreChevron = styled.div`
  margin: 10px 0 0 2px;
`;

const OkularView = styled.div`
  flex: 1;
  min-height: 0;
  display: flex;
  background: #7b7975;
  overflow: hidden;
`;

const Pages = styled.div`
  flex: none;
  width: 826px;
  padding-left: 5px;
  box-sizing: border-box;
  overflow: hidden;
`;

const PagesGrid = styled.div`
  display: grid;
  grid-template-columns: 408px 408px;
  row-gap: 11px;
  margin-top: -43px;
`;

const SlideBox = styled.div`
  height: 305px;
  display: flex;
  flex-direction: column;
  background: #f2f2f2;
  border-right: 1px solid #000;
  overflow: hidden;
  box-sizing: border-box;
  font-family: "Liberation Sans", Arial, sans-serif;
  font-weight: 400;

  &:nth-child(odd) {
    border-left: 1px solid #000;
  }
`;

const SlideHeader = styled.div`
  flex: none;
  height: 30px;
  display: flex;
  background: #2d2d9f;
`;

const SectionNav = styled.div`
  width: 204px;
  box-sizing: border-box;
  background: #000;
  padding: 3px 10px 0 0;
  display: flex;
  flex-direction: column;
  align-items: flex-end;
  font-size: 6.7px;
  line-height: 8.5px;
`;

const SectionLink = styled.div<{ $active: boolean }>`
  color: ${(p) => (p.$active ? '#fff' : '#6f6f6f')};
`;

const SlideTitle = styled.div`
  flex: none;
  height: 23px;
  line-height: 22px;
  padding-left: 13px;
  color: #fff;
  font-size: 16px;
  background: linear-gradient(90deg, #2d2d9f, #000 92%);
  box-shadow: 0 1px 2px rgba(0, 0, 0, 0.3);
`;

const SlideBody = styled.div`
  position: relative;
  flex: 1;
  min-height: 0;
  font-size: 12px;
  color: #111;
`;

const NavMarks = styled.svg`
  position: absolute;
  right: 4px;
  bottom: 4px;
`;

const SlideFooter = styled.div`
  flex: none;
  height: 13px;
  display: flex;
  font-size: 6.5px;
  line-height: 13px;
  color: #ddd;
`;

const FooterAuthor = styled.div`
  width: 204px;
  box-sizing: border-box;
  text-align: right;
  padding-right: 9px;
  background: #000;
`;

const FooterTalk = styled.div`
  flex: 1;
  padding-left: 9px;
  background: #2d2d9f;
`;

const ContentsList = styled.div`
  padding: 59px 0 0 27px;
  display: flex;
  flex-direction: column;
  gap: 28px;
`;

const ContentsItem = styled.div`
  height: 16px;
  display: flex;
  align-items: center;
  gap: 6px;
  color: #3a3a9a;
  font-size: 12.2px;
`;

const Ball = styled.div`
  width: 16px;
  height: 16px;
  border-radius: 50%;
  display: flex;
  align-items: center;
  justify-content: center;
  color: #ccd;
  font-size: 7px;
  background: radial-gradient(circle at 40% 35%, #5a5ab5, #23236f);
`;

const BulletList = styled.div<{ $top: number }>`
  padding: ${(p) => p.$top}px 0 0 44px;
`;

const Bullet = styled.div<{ $sub?: boolean; $after?: number }>`
  display: flex;
  align-items: center;
  gap: ${(p) => (p.$sub ? 8 : 6)}px;
  white-space: nowrap;
  height: ${(p) => (p.$sub ? 13.5 : 16)}px;
  margin-bottom: ${(p) => p.$after ?? 0}px;
  margin-left: ${(p) => (p.$sub ? 24 : 0)}px;
  font-size: ${(p) => (p.$sub ? 11 : 12.2)}px;

  &::before {
    content: '';
    flex: none;
    width: ${(p) => (p.$sub ? 4.5 : 6)}px;
    height: ${(p) => (p.$sub ? 4.5 : 6)}px;
    border-radius: 50%;
    background: radial-gradient(circle at 40% 35%, #6a6ac5, #23236f);
  }
`;

const SlideTable = styled.table`
  border-collapse: collapse;
  table-layout: fixed;
  width: 767px;
  margin: 61px 0 0 31px;
  font-size: 12.2px;
  line-height: 13px;
`;

const SlideCell = styled.td<{ $bold?: boolean }>`
  padding: 0 2px;
  border: 1px solid #000;
  height: 14.5px;
  vertical-align: top;
  text-align: center;
  white-space: nowrap;
  font-weight: ${(p) => (p.$bold ? 'bold' : 'normal')};
`;

const SlideCaption = styled.div`
  margin-top: 6px;
  text-align: center;
  font-size: 11.5px;

  em {
    font-style: normal;
    color: #3a3a9a;
  }
`;

const OkularVScroll = styled.div`
  flex: none;
  width: 12px;
  display: flex;
  flex-direction: column;
  align-items: center;
  gap: 2px;
  padding-top: 3px;
  box-sizing: border-box;
`;

const OkularVTrack = styled.div`
  flex: 1;
  width: 12px;
  border-radius: 4px;
  background: #a8a4a0;
  box-shadow: inset 0 0 0 1px #98948f;
  padding-top: 232px;
  box-sizing: border-box;
`;

const OkularVHandle = styled.div`
  height: 523px;
  margin: 0 1px;
  border-radius: 3px;
  background: linear-gradient(90deg, #e6e4e1, #d2cfcb);
`;

const PageNav = styled.div`
  flex: none;
  height: 30px;
  display: flex;
  align-items: center;
  justify-content: center;
  padding-left: 3px;
  background: #bab6b2;
  font-size: 16.6px;
`;

const PageInput = styled.div`
  width: 34px;
  height: 22px;
  line-height: 21px;
  box-sizing: border-box;
  margin: 0 11px 0 15px;
  text-align: center;
  background: #f4f4f3;
  border: 1px solid #a9a6a2;
  border-radius: 3px;
`;

const PageOf = styled.span<{ $after: number }>`
  margin-right: ${(p) => p.$after}px;
  color: #444;
`;
